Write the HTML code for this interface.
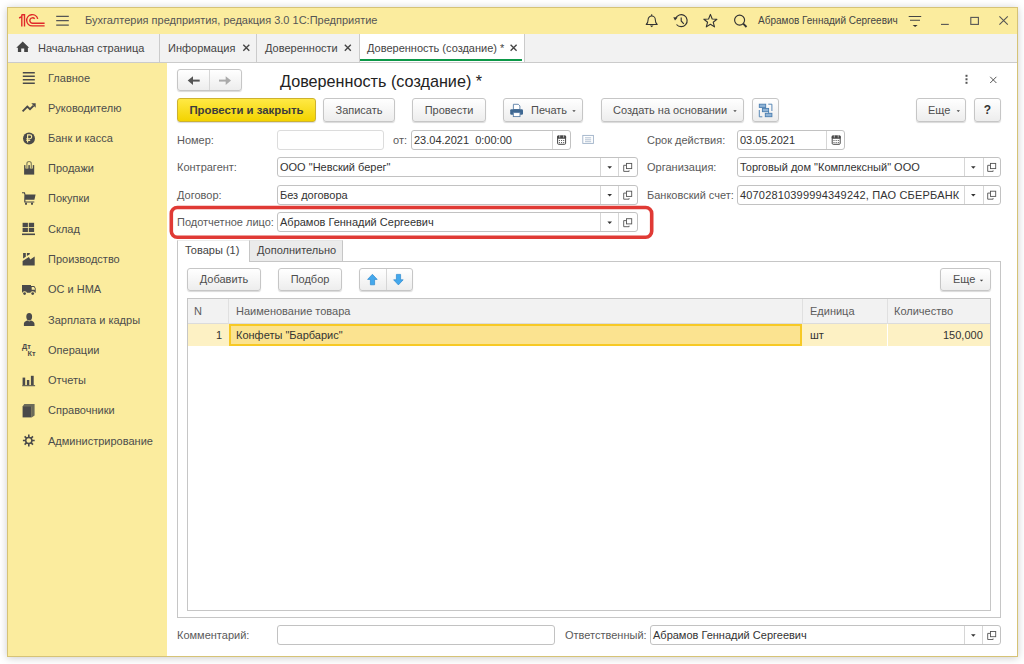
<!DOCTYPE html>
<html><head><meta charset="utf-8">
<style>
*{box-sizing:border-box;margin:0;padding:0}
html,body{width:1024px;height:664px;overflow:hidden;background:#fff;font-family:"Liberation Sans",sans-serif;font-size:11px;color:#4d4d4d}
.a{position:absolute}
.t{position:absolute;white-space:nowrap;line-height:13px}
.btn{position:absolute;height:24px;border:1px solid #c6c6c6;border-radius:3px;background:linear-gradient(#ffffff,#ededed);box-shadow:0 1px 1px rgba(0,0,0,0.15);text-align:center;line-height:22px;color:#4f4f4f;white-space:nowrap}
.inp{position:absolute;height:20px;border:1px solid #c2c2c2;border-radius:3px;background:#fff;line-height:18px;padding-left:2px;color:#333;white-space:nowrap;overflow:hidden}
.dd{position:absolute;top:0;height:18px;border-left:1px solid #d6d6d6}
.lbl{position:absolute;white-space:nowrap;color:#5a5a5a;line-height:13px}
.side .it{position:absolute;left:48px;white-space:nowrap;color:#4c4c4c;line-height:13px}
</style></head><body>
<!-- window frame -->
<div class="a" style="left:7px;top:7px;width:1011px;height:650px;box-shadow:0 1px 8px rgba(0,0,0,0.2);background:#fff"></div>
<!-- title bar -->
<div class="a" style="left:8px;top:8px;width:1009px;height:26px;background:#fbec9e"></div>
<!-- tab bar -->
<div class="a" style="left:8px;top:34px;width:1009px;height:29px;background:#f2f2f2;border-bottom:1px solid #cbcbcb"></div>
<!-- sidebar -->
<div class="a" style="left:8px;top:63px;width:159px;height:593px;background:#fbec9e"></div>

<!-- title texts -->
<div class="t" style="left:85px;top:14px;color:#555">Бухгалтерия предприятия, редакция 3.0 1С:Предприятие</div>
<div class="t" style="left:758px;top:14px;color:#444;font-size:10px">Абрамов Геннадий Сергеевич</div>

<!-- tabs -->
<div class="t" style="left:38px;top:42px;color:#444">Начальная страница</div>
<div class="a" style="left:159px;top:34px;width:1px;height:28px;background:#cbcbcb"></div>
<div class="t" style="left:168px;top:42px;color:#444">Информация</div>
<div class="a" style="left:256px;top:34px;width:1px;height:28px;background:#cbcbcb"></div>
<div class="t" style="left:265px;top:42px;color:#444">Доверенности</div>
<div class="a" style="left:359px;top:34px;width:1px;height:28px;background:#cbcbcb"></div>
<div class="a" style="left:360px;top:34px;width:164px;height:28px;background:#fff"></div>
<div class="a" style="left:360px;top:59px;width:162px;height:2px;background:#0c9848"></div>
<div class="t" style="left:367px;top:42px;color:#444">Доверенность (создание) *</div>
<div class="a" style="left:524px;top:34px;width:1px;height:28px;background:#cbcbcb"></div>

<!-- sidebar items -->
<div class="side">
<div class="it" style="top:72px">Главное</div>
<div class="it" style="top:102px">Руководителю</div>
<div class="it" style="top:132px">Банк и касса</div>
<div class="it" style="top:162px">Продажи</div>
<div class="it" style="top:192px">Покупки</div>
<div class="it" style="top:223px">Склад</div>
<div class="it" style="top:253px">Производство</div>
<div class="it" style="top:283px">ОС и НМА</div>
<div class="it" style="top:314px">Зарплата и кадры</div>
<div class="it" style="top:344px">Операции</div>
<div class="it" style="top:374px">Отчеты</div>
<div class="it" style="top:404px">Справочники</div>
<div class="it" style="top:435px">Администрирование</div>
</div>

<!-- form header -->
<div class="btn" style="left:177px;top:69px;width:65px;height:22px"></div>
<div class="a" style="left:209px;top:70px;width:1px;height:20px;background:#d6d6d6"></div>
<div class="t" style="left:280px;top:72px;font-size:16.2px;line-height:18px;color:#222">Доверенность (создание) *</div>

<!-- command bar -->
<div class="btn" style="left:177px;top:98px;width:139px;background:linear-gradient(#ffe945,#f3d300);border-color:#cdb22e;color:#3c3c3c;font-weight:bold;font-size:11.4px">Провести и закрыть</div>
<div class="btn" style="left:323px;top:98px;width:72px">Записать</div>
<div class="btn" style="left:412px;top:98px;width:74px">Провести</div>
<div class="btn" style="left:503px;top:98px;width:80px;text-align:left;padding-left:27px">Печать</div>
<div class="btn" style="left:601px;top:98px;width:143px;text-align:left;padding-left:11px">Создать на основании</div>
<div class="btn" style="left:752px;top:98px;width:27px"></div>
<div class="btn" style="left:916px;top:98px;width:50px;text-align:left;padding-left:11px">Еще</div>
<div class="btn" style="left:974px;top:98px;width:27px;font-weight:bold;font-size:12px;color:#333">?</div>

<!-- fields -->
<div class="lbl" style="left:177px;top:134px">Номер:</div>
<div class="inp" style="left:277px;top:130px;width:107px;border-color:#dcdcdc"></div>
<div class="lbl" style="left:393px;top:134px">от:</div>
<div class="inp" style="left:411px;top:130px;width:160px">23.04.2021&nbsp; 0:00:00<div class="dd" style="left:140px"></div></div>
<div class="lbl" style="left:647px;top:134px">Срок действия:</div>
<div class="inp" style="left:737px;top:130px;width:108px">03.05.2021<div class="dd" style="left:88px"></div></div>

<div class="lbl" style="left:177px;top:161px">Контрагент:</div>
<div class="inp" style="left:277px;top:157px;width:361px">ООО "Невский берег"<div class="dd" style="left:322px"></div><div class="dd" style="left:340px"></div></div>
<div class="lbl" style="left:647px;top:161px">Организация:</div>
<div class="inp" style="left:737px;top:157px;width:264px">Торговый дом "Комплексный" ООО<div class="dd" style="left:226px"></div><div class="dd" style="left:245px"></div></div>

<div class="lbl" style="left:177px;top:189px">Договор:</div>
<div class="inp" style="left:277px;top:185px;width:361px">Без договора<div class="dd" style="left:322px"></div><div class="dd" style="left:340px"></div></div>
<div class="lbl" style="left:647px;top:189px">Банковский счет:</div>
<div class="inp" style="left:737px;top:185px;width:264px;letter-spacing:0.17px">40702810399994349242, ПАО СБЕРБАНК<div class="dd" style="left:226px"></div><div class="dd" style="left:245px"></div></div>

<div class="lbl" style="left:177px;top:216px">Подотчетное лицо:</div>
<div class="inp" style="left:277px;top:212px;width:361px">Абрамов Геннадий Сергеевич<div class="dd" style="left:322px"></div><div class="dd" style="left:340px"></div></div>
<svg class="a" style="left:0;top:0" width="1024" height="664"><rect x="171.3" y="207.5" width="480.4" height="29.7" rx="6" fill="none" stroke="#e03a35" stroke-width="3.6"/></svg>

<!-- tabs panel -->
<div class="a" style="left:177px;top:261px;width:824px;height:357px;border:1px solid #c6c6c6"></div>
<div class="a" style="left:177px;top:240px;width:73px;height:22px;border:1px solid #c6c6c6;border-top-color:#ececec;border-bottom:none;background:#fff"></div>
<div class="t" style="left:185px;top:244px;color:#444">Товары (1)</div>
<div class="a" style="left:249px;top:240px;width:94px;height:22px;border:1px solid #c6c6c6;border-top-color:#e4e4e4;background:#ebebeb"></div>
<div class="t" style="left:257px;top:244px;color:#444">Дополнительно</div>

<div class="btn" style="left:187px;top:268px;width:74px;height:23px;line-height:21px">Добавить</div>
<div class="btn" style="left:278px;top:268px;width:64px;height:23px;line-height:21px">Подбор</div>
<div class="btn" style="left:359px;top:268px;width:54px;height:23px"></div>
<div class="a" style="left:386px;top:269px;width:1px;height:21px;background:#d6d6d6"></div>
<div class="btn" style="left:940px;top:268px;width:51px;height:23px;line-height:21px;text-align:left;padding-left:12px">Еще</div>

<!-- table -->
<div class="a" style="left:187px;top:298px;width:804px;height:313px;border:1px solid #c6c6c6"></div>
<div class="a" style="left:188px;top:299px;width:802px;height:25px;background:#f2f2f2;border-bottom:1px solid #dcdcdc"></div>
<div class="a" style="left:228px;top:299px;width:1px;height:47px;background:#e0e0e0"></div>
<div class="a" style="left:802px;top:299px;width:1px;height:47px;background:#e0e0e0"></div>
<div class="a" style="left:887px;top:299px;width:1px;height:47px;background:#e0e0e0"></div>
<div class="t" style="left:194px;top:305px;color:#5c5c5c">N</div>
<div class="t" style="left:236px;top:305px;color:#5c5c5c">Наименование товара</div>
<div class="t" style="left:810px;top:305px;color:#5c5c5c">Единица</div>
<div class="t" style="left:894px;top:305px;color:#5c5c5c">Количество</div>
<div class="a" style="left:188px;top:324px;width:802px;height:22px;background:#fdf1c4"></div>
<div class="a" style="left:229px;top:324px;width:573px;height:22px;background:#fbe390;border:2px solid #f7c925"></div>
<div class="a" style="left:887px;top:324px;width:1px;height:22px;background:#fff"></div>
<div class="t" style="left:216px;top:329px;color:#333">1</div>
<div class="t" style="left:236px;top:329px;color:#333">Конфеты "Барбарис"</div>
<div class="t" style="left:810px;top:329px;color:#333">шт</div>
<div class="t" style="left:943px;top:329px;color:#333">150,000</div>

<!-- footer -->
<div class="lbl" style="left:177px;top:629px">Комментарий:</div>
<div class="inp" style="left:277px;top:625px;width:278px"></div>
<div class="lbl" style="left:565px;top:629px">Ответственный:</div>
<div class="inp" style="left:650px;top:625px;width:351px">Абрамов Геннадий Сергеевич<div class="dd" style="left:313px"></div><div class="dd" style="left:331px"></div></div>

<!-- ICONS -->
<svg class="a" style="left:0;top:0" width="1024" height="664" viewBox="0 0 1024 664">
 <!-- 1C logo -->
 <g fill="none" stroke="#e0282a" stroke-width="1.4">
  <path d="M19.1 18 L21.8 16.7 M21.8 14.8 V26.4 M21.5 14.8 H24.5 V26.4"/>
  <path d="M37.7 18.9 A5.6 5.6 0 1 0 32.3 25.9 H44.6"/>
  <path d="M34.7 18.8 A2.75 2.75 0 1 0 32.4 23.3 H44.6"/>
 </g>
 <!-- hamburger -->
 <g stroke="#555" stroke-width="1.2">
  <path d="M56.2 16.3 H68.8 M56.2 20.7 H68.8 M56.2 25.1 H68.8"/>
 </g>
 <!-- bell -->
 <g fill="none" stroke="#333" stroke-width="1.05">
  <path d="M646.2 24.5 H657.2 C655.7 23.2 655.3 21.6 655.3 19.7 A3.6 3.6 0 0 0 648.1 19.7 C648.1 21.6 647.7 23.2 646.2 24.5 Z" stroke-linejoin="round"/>
  <path d="M651.7 14.2 V16"/>
 </g>
 <path d="M649.9 25.6 H653.5 L651.7 27.2 Z" fill="#333"/>
 <!-- history -->
 <g fill="none" stroke="#333" stroke-width="1.15">
  <path d="M675.6 18.4 A6 6 0 1 1 676.5 24.5"/>
  <path d="M681.2 17.5 V21 L683.8 23.8"/>
 </g>
 <path d="M673.3 17.2 L677.6 17.4 L675 20.6 Z" fill="#333"/>
 <!-- star -->
 <path d="M710.4 14.4 L712.2 19 L716.9 19.2 L713.2 22.2 L714.5 26.9 L710.4 24.2 L706.3 26.9 L707.6 22.2 L703.9 19.2 L708.6 19 Z" fill="none" stroke="#333" stroke-width="1.1" stroke-linejoin="round"/>
 <!-- search -->
 <circle cx="739.6" cy="20.1" r="5" fill="none" stroke="#333" stroke-width="1.15"/>
 <path d="M743.2 23.7 L746.5 27" stroke="#333" stroke-width="1.9"/>
 <!-- filter icon -->
 <g stroke="#444" stroke-width="1.1"><path d="M908.7 16.5 H921.2 M910 20.3 H920"/></g>
 <path d="M912.6 24.9 H917.6 L915.1 27 Z" fill="#333"/>
 <!-- minimize/max/close -->
 <path d="M941 24.4 H948.8" stroke="#555" stroke-width="1.1"/>
 <rect x="970.8" y="17.4" width="7.6" height="7" fill="none" stroke="#555" stroke-width="1.1"/>
 <path d="M999.4 16.4 L1007.8 24.6 M1007.8 16.4 L999.4 24.6" stroke="#555" stroke-width="1.1"/>
 <!-- home -->
 <path d="M22.7 41.5 L29.2 47.7 H27.9 V52 H24.2 V48.4 H21.2 V52 H17.9 V47.7 H16.3 Z" fill="#444"/>
 <!-- tab close x -->
 <g stroke="#444" stroke-width="1.35">
  <path d="M243.3 44.8 L249.3 50.8 M249.3 44.8 L243.3 50.8"/>
  <path d="M344.8 44.8 L350.8 50.8 M350.8 44.8 L344.8 50.8"/>
  <path d="M510.6 44.8 L516.6 50.8 M516.6 44.8 L510.6 50.8"/>
 </g>

 <!-- sidebar icons -->
 <g fill="#4a4a4a">
  <!-- glavnoe -->
  <rect x="22.8" y="72" width="12" height="1.5"/><rect x="22.8" y="75.5" width="12" height="1.5"/><rect x="22.8" y="79" width="12" height="1.5"/><rect x="22.8" y="82.5" width="12" height="1.5"/>
  <!-- trend -->
  <path d="M22.6 111.3 L27.3 106.6 L30 109.2 L33.6 105.6" fill="none" stroke="#4a4a4a" stroke-width="1.9"/>
  <path d="M31.3 103.3 L35.7 103.3 L35.7 107.7 Z"/>
  <!-- ruble -->
  <circle cx="29" cy="138.4" r="6"/>
  <path d="M27.6 142.5 V134.9 H29.8 A1.9 1.9 0 0 1 29.8 138.7 H26.3 M26.3 140.4 H30.2" fill="none" stroke="#fbec9e" stroke-width="1.15"/>
  <!-- bag -->
  <path d="M24.1 165.1 H34.2 V174.6 H24.1 Z"/>
  <path d="M26.9 168.4 V163.7 A2.2 2.2 0 0 1 31.3 163.7 V168.4" fill="none" stroke="#fbec9e" stroke-width="2.9"/>
  <path d="M26.9 168.4 V163.7 A2.2 2.2 0 0 1 31.3 163.7 V168.4" fill="none" stroke="#85815e" stroke-width="1.2"/>
  <!-- cart -->
  <path d="M22 192.2 H24.9 L25.5 194.6 H35.6 L34.4 199.7 H25.4 V201.6 H34.3 V202.4 H24.2 V199.7 L24.4 194.6 L23.8 193.3 H22 Z"/>
  <rect x="25" y="202.6" width="2" height="2.3" rx="0.8"/><rect x="31" y="202.6" width="2" height="2.3" rx="0.8"/>
  <!-- sklad -->
  <rect x="22.6" y="222.8" width="5.3" height="4.2"/><rect x="28.8" y="222.8" width="5.3" height="4.2"/>
  <rect x="22.6" y="227.8" width="5.3" height="4.2"/><rect x="28.8" y="227.8" width="5.3" height="4.2"/>
  <rect x="22" y="233.5" width="13" height="1.6"/>
  <!-- factory -->
  <path d="M22.6 265.4 V260.9 L28.9 257.1 L30.3 259.6 L34.7 256.6 V265.4 Z"/>
  <path d="M23.1 253 H25.8 V256.8 L23.1 258.4 Z M26.9 253 H29.8 V254.3 L26.9 256.1 Z"/>
  <!-- truck -->
  <path d="M22 284.9 H31 V286.1 H34.3 L35.7 288.2 V292.8 H22 Z"/>
  <path d="M31.7 287 H33.9 L34.9 288.4 V289.7 H31.7 Z" fill="#fbec9e"/>
  <circle cx="24.6" cy="293.6" r="2.4" fill="#fbec9e"/><circle cx="32.7" cy="293.6" r="2.4" fill="#fbec9e"/>
  <circle cx="24.6" cy="293.6" r="1.4"/><circle cx="32.7" cy="293.6" r="1.4"/>
  <!-- person -->
  <ellipse cx="29.2" cy="316.8" rx="2.9" ry="3.7"/>
  <path d="M23.9 325.9 V323.8 C23.9 321.5 26.5 320.6 27.8 320.4 L29.2 321.6 L30.6 320.4 C32 320.6 34.5 321.5 34.5 323.8 V325.9 Z"/>
  <!-- reports -->
  <rect x="22.6" y="377.6" width="2.6" height="7.6"/><rect x="26.9" y="380" width="2.4" height="5.2"/><rect x="30.9" y="375.8" width="2.8" height="9.4"/>
  <rect x="22.2" y="385.2" width="12.9" height="1"/>
  <!-- book -->
  <path d="M24.3 404 H34.6 V415.6 L31.6 417.4 V406.4 H22.6 Z" fill="#6b6b5a"/>
  <rect x="22.6" y="406.2" width="9" height="11.2"/>
 </g>
 <!-- gear -->
 <g transform="translate(28.8 440.5)">
  <circle r="3.1" fill="none" stroke="#4a4a4a" stroke-width="1.5"/>
  <path d="M3.00 0.00 L5.90 0.00 M2.12 2.12 L4.17 4.17 M0.00 3.00 L0.00 5.90 M-2.12 2.12 L-4.17 4.17 M-3.00 0.00 L-5.90 0.00 M-2.12 -2.12 L-4.17 -4.17 M-0.00 -3.00 L-0.00 -5.90 M2.12 -2.12 L4.17 -4.17 " stroke="#4a4a4a" stroke-width="1.6"/>
 </g>
 <!-- Dt Kt -->
 <text x="22" y="349.4" font-family="Liberation Sans" font-weight="bold" font-size="7.3" fill="#4a4a4a">Дт</text>
 <text x="27.6" y="356.4" font-family="Liberation Sans" font-weight="bold" font-size="7.3" fill="#4a4a4a">Кт</text>

 <!-- nav arrows -->
 <path d="M199.7 80.6 H191.5" stroke="#555" stroke-width="2"/>
 <path d="M187.7 80.6 L193 76.2 V85 Z" fill="#555"/>
 <path d="M219 80.6 H227" stroke="#aaa" stroke-width="2"/>
 <path d="M231 80.6 L225.7 76.2 V85 Z" fill="#aaa"/>
 <!-- form kebab & close -->
 <g fill="#555"><rect x="965.5" y="74.8" width="2" height="2"/><rect x="965.5" y="78.3" width="2" height="2"/><rect x="965.5" y="81.8" width="2" height="2"/></g>
 <path d="M990.2 76.8 L996.4 83 M996.4 76.8 L990.2 83" stroke="#555" stroke-width="1"/>
 <!-- printer -->
 <path d="M513.4 104.3 H518.3 L519.9 105.9 V109.5 H513.4 Z" fill="#fff" stroke="#5a7ea6" stroke-width="0.9"/>
 <rect x="510.2" y="109.2" width="12.8" height="5.6" rx="1.2" fill="#3e6791"/>
 <rect x="513.3" y="112.6" width="6.7" height="4" fill="#fff" stroke="#5a7ea6" stroke-width="0.9"/>
 <!-- dropdown small arrows in buttons -->
 <g fill="#444">
  <path d="M572.3 110.2 H575.7 L574 111.9 Z"/>
  <path d="M733.3 110.2 H736.7 L735 111.9 Z"/>
  <path d="M956.6 110.2 H960 L958.3 111.9 Z"/>
  <path d="M979.8 279.8 H983.2 L981.5 281.5 Z"/>
 </g>
 <!-- structure icon -->
 <g fill="#8fb3d6" stroke="#4a7eb0" stroke-width="0.9">
  <rect x="759.3" y="104.2" width="6.4" height="3.2"/>
  <rect x="762.4" y="108.4" width="6.2" height="3.3"/>
  <rect x="765.3" y="113.3" width="6.6" height="3.4"/>
 </g>
 <g fill="none" stroke="#4a7eb0" stroke-width="0.9">
  <path d="M759.3 110 V116.8 H762.3 M768.3 104.2 H771.9 V111"/>
  <path d="M765.5 107.4 V108.4 M768.6 111.7 V113.3"/>
 </g>
 <!-- calendar icons -->
 <g>
  <rect x="557.6" y="136.1" width="8" height="8.2" rx="1" fill="#fff" stroke="#474747" stroke-width="1"/>
  <rect x="557.1" y="135.6" width="9" height="3.2" rx="1" fill="#474747"/>
  <rect x="559.2" y="135" width="1" height="2.6" fill="#bbb"/><rect x="563.1" y="135" width="1" height="2.6" fill="#bbb"/>
  <g fill="#474747"><circle cx="559.40" cy="140.5" r="0.62"/><circle cx="561.55" cy="140.5" r="0.62"/><circle cx="563.70" cy="140.5" r="0.62"/><circle cx="559.40" cy="142.6" r="0.62"/><circle cx="561.55" cy="142.6" r="0.62"/><circle cx="563.70" cy="142.6" r="0.62"/></g></g>
 <g>
  <rect x="832.2" y="136.1" width="8" height="8.2" rx="1" fill="#fff" stroke="#474747" stroke-width="1"/>
  <rect x="831.7" y="135.6" width="9" height="3.2" rx="1" fill="#474747"/>
  <rect x="833.8" y="135" width="1" height="2.6" fill="#bbb"/><rect x="837.7" y="135" width="1" height="2.6" fill="#bbb"/>
  <g fill="#474747"><circle cx="834.00" cy="140.5" r="0.62"/><circle cx="836.15" cy="140.5" r="0.62"/><circle cx="838.30" cy="140.5" r="0.62"/><circle cx="834.00" cy="142.6" r="0.62"/><circle cx="836.15" cy="142.6" r="0.62"/><circle cx="838.30" cy="142.6" r="0.62"/></g></g>
 <!-- doc icon -->
 <rect x="582.8" y="135.4" width="10.6" height="8" fill="#fff" stroke="#9fb2c8" stroke-width="0.9"/>
 <path d="M585 137.8 H591.2 M585 139.8 H591.2 M585 141.7 H591.2" stroke="#9fb2c8" stroke-width="0.8"/>
 <!-- input icons -->
<path d="M607.4 166.2 H612.0 L609.7 168.7 Z" fill="#333"/><path d="M626.3 165.3 H623.7 V171.4 H629.1 V170.4" fill="none" stroke="#555" stroke-width="0.9"/><rect x="626.5" y="163.4" width="5.2" height="5.2" fill="#fff" stroke="#555" stroke-width="0.9"/>
<path d="M607.4 194.0 H612.0 L609.7 196.5 Z" fill="#333"/><path d="M626.3 193.1 H623.7 V199.2 H629.1 V198.2" fill="none" stroke="#555" stroke-width="0.9"/><rect x="626.5" y="191.2" width="5.2" height="5.2" fill="#fff" stroke="#555" stroke-width="0.9"/>
<path d="M607.4 221.5 H612.0 L609.7 224.0 Z" fill="#333"/><path d="M626.3 220.6 H623.7 V226.7 H629.1 V225.7" fill="none" stroke="#555" stroke-width="0.9"/><rect x="626.5" y="218.7" width="5.2" height="5.2" fill="#fff" stroke="#555" stroke-width="0.9"/>
<path d="M971.0 166.2 H975.6 L973.3 168.7 Z" fill="#333"/><path d="M990.3 165.3 H987.7 V171.4 H993.1 V170.4" fill="none" stroke="#555" stroke-width="0.9"/><rect x="990.5" y="163.4" width="5.2" height="5.2" fill="#fff" stroke="#555" stroke-width="0.9"/>
<path d="M971.0 194.0 H975.6 L973.3 196.5 Z" fill="#333"/><path d="M990.3 193.1 H987.7 V199.2 H993.1 V198.2" fill="none" stroke="#555" stroke-width="0.9"/><rect x="990.5" y="191.2" width="5.2" height="5.2" fill="#fff" stroke="#555" stroke-width="0.9"/>
<path d="M971.0 634.3 H975.6 L973.3 636.8 Z" fill="#333"/><path d="M990.3 633.4 H987.7 V639.5 H993.1 V638.5" fill="none" stroke="#555" stroke-width="0.9"/><rect x="990.5" y="631.5" width="5.2" height="5.2" fill="#fff" stroke="#555" stroke-width="0.9"/>
 <!-- up/down arrows -->
 <path d="M372.4 274.3 L377.2 279.4 H374.6 V284.8 H370.4 V279.4 H367.6 Z" fill="#44a8ec" stroke="#2d8ad0" stroke-width="0.7" stroke-linejoin="round"/>
 <path d="M398.4 284.9 L403.2 279.8 H400.6 V274.4 H396.4 V279.8 H393.6 Z" fill="#44a8ec" stroke="#2d8ad0" stroke-width="0.7" stroke-linejoin="round"/>
</svg>
<div class="a" style="left:7px;top:7px;width:1011px;height:650px;border:1px solid #d6c376"></div>
</body></html>
